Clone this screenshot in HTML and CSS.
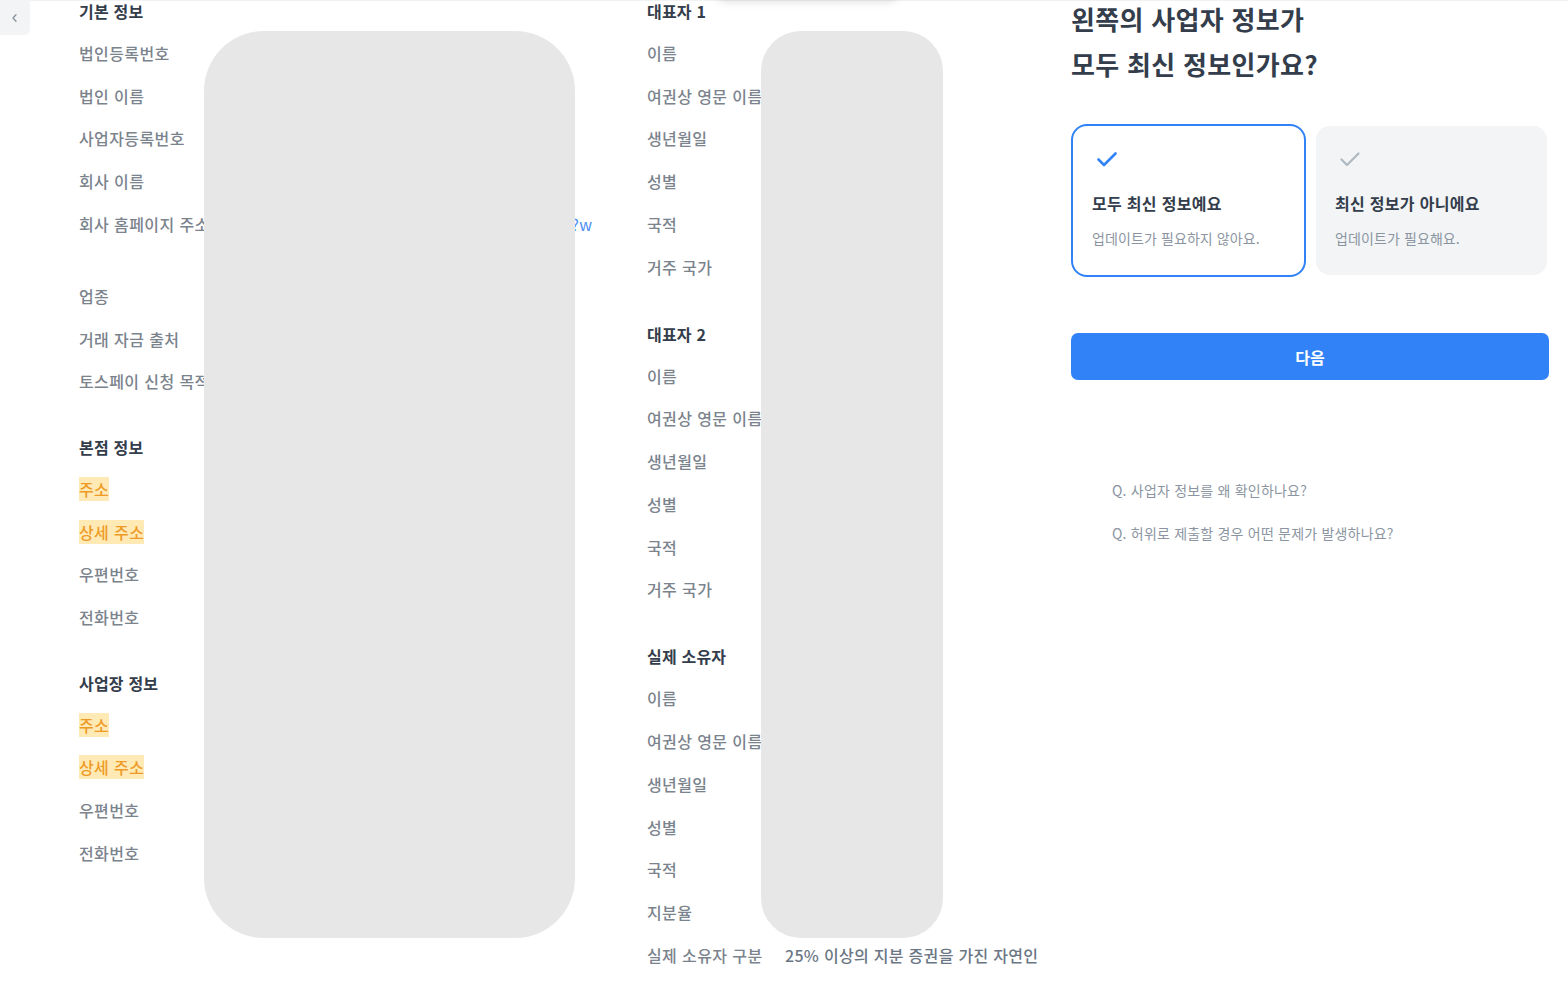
FILE: index.html
```html
<!DOCTYPE html>
<html lang="ko">
<head>
    <meta charset="UTF-8">
    <meta name="viewport" content="width=device-width, initial-scale=1.0">
    <title>사업자 정보 확인</title>
    <link rel="stylesheet" href="styles.css">
</head>
<body>
    <div class="page">
        <button class="back-btn" type="button" aria-label="뒤로">
            <svg width="8" height="10" viewBox="0 0 8 10"><path d="M5 1.8 L2 5 L5 8.2" fill="none" stroke="#8b95a1" stroke-width="1.4" stroke-linecap="round" stroke-linejoin="round"/></svg>
        </button>
        <div class="top-popover"></div>

        <main class="review">
            <!-- company info -->
            <section class="info-col info-col--company">
                <div class="group">
                    <div class="group-title">기본 정보</div>
                    <div class="row"><span class="row-label">법인등록번호</span><span class="row-value"></span></div>
                    <div class="row"><span class="row-label">법인 이름</span><span class="row-value"></span></div>
                    <div class="row"><span class="row-label">사업자등록번호</span><span class="row-value"></span></div>
                    <div class="row"><span class="row-label">회사 이름</span><span class="row-value"></span></div>
                    <div class="row">
                        <span class="row-label">회사 홈페이지 주소</span>
                        <span class="row-value row-value--link">
                            <a href="#" class="link-line">https://www.company-homepage.co.kr/main?w</a>
                            <a href="#" class="link-line">ww</a>
                        </span>
                    </div>
                    <div class="row"><span class="row-label">업종</span><span class="row-value"></span></div>
                    <div class="row"><span class="row-label">거래 자금 출처</span><span class="row-value"></span></div>
                    <div class="row"><span class="row-label">토스페이 신청 목적</span><span class="row-value"></span></div>
                </div>

                <div class="group">
                    <div class="group-title">본점 정보</div>
                    <div class="row"><span class="row-label"><mark class="hl">주소</mark></span><span class="row-value"></span></div>
                    <div class="row"><span class="row-label"><mark class="hl">상세 주소</mark></span><span class="row-value"></span></div>
                    <div class="row"><span class="row-label">우편번호</span><span class="row-value"></span></div>
                    <div class="row"><span class="row-label">전화번호</span><span class="row-value"></span></div>
                </div>

                <div class="group">
                    <div class="group-title">사업장 정보</div>
                    <div class="row"><span class="row-label"><mark class="hl">주소</mark></span><span class="row-value"></span></div>
                    <div class="row"><span class="row-label"><mark class="hl">상세 주소</mark></span><span class="row-value"></span></div>
                    <div class="row"><span class="row-label">우편번호</span><span class="row-value"></span></div>
                    <div class="row"><span class="row-label">전화번호</span><span class="row-value"></span></div>
                </div>

                <div class="mask mask--wide"></div>
            </section>

            <!-- representatives -->
            <section class="info-col info-col--people">
                <div class="group">
                    <div class="group-title">대표자 1</div>
                    <div class="row"><span class="row-label">이름</span><span class="row-value"></span></div>
                    <div class="row"><span class="row-label">여권상 영문 이름</span><span class="row-value"></span></div>
                    <div class="row"><span class="row-label">생년월일</span><span class="row-value"></span></div>
                    <div class="row"><span class="row-label">성별</span><span class="row-value"></span></div>
                    <div class="row"><span class="row-label">국적</span><span class="row-value"></span></div>
                    <div class="row"><span class="row-label">거주 국가</span><span class="row-value"></span></div>
                </div>

                <div class="group">
                    <div class="group-title">대표자 2</div>
                    <div class="row"><span class="row-label">이름</span><span class="row-value"></span></div>
                    <div class="row"><span class="row-label">여권상 영문 이름</span><span class="row-value"></span></div>
                    <div class="row"><span class="row-label">생년월일</span><span class="row-value"></span></div>
                    <div class="row"><span class="row-label">성별</span><span class="row-value"></span></div>
                    <div class="row"><span class="row-label">국적</span><span class="row-value"></span></div>
                    <div class="row"><span class="row-label">거주 국가</span><span class="row-value"></span></div>
                </div>

                <div class="group">
                    <div class="group-title">실제 소유자</div>
                    <div class="row"><span class="row-label">이름</span><span class="row-value"></span></div>
                    <div class="row"><span class="row-label">여권상 영문 이름</span><span class="row-value"></span></div>
                    <div class="row"><span class="row-label">생년월일</span><span class="row-value"></span></div>
                    <div class="row"><span class="row-label">성별</span><span class="row-value"></span></div>
                    <div class="row"><span class="row-label">국적</span><span class="row-value"></span></div>
                    <div class="row"><span class="row-label">지분율</span><span class="row-value"></span></div>
                    <div class="row"><span class="row-label">실제 소유자 구분</span><span class="row-value row-value--text">25% 이상의 지분 증권을 가진 자연인</span></div>
                </div>

                <div class="mask mask--narrow"></div>
            </section>

            <!-- confirm panel -->
            <aside class="confirm">
                <h2 class="confirm-title">왼쪽의 사업자 정보가<br>모두 최신 정보인가요?</h2>

                <div class="choices">
                    <div class="choice choice--on">
                        <svg class="choice-check" width="26" height="24" viewBox="0 0 26 24"><path d="M6.5 11.5 L12 17 L23.5 5.5" fill="none" stroke="#3182f6" stroke-width="2.6" stroke-linecap="round" stroke-linejoin="round"/></svg>
                        <div class="choice-title">모두 최신 정보예요</div>
                        <div class="choice-desc">업데이트가 필요하지 않아요.</div>
                    </div>
                    <div class="choice choice--off">
                        <svg class="choice-check" width="26" height="24" viewBox="0 0 26 24"><path d="M6.5 11.5 L12 17 L23.5 5.5" fill="none" stroke="#b0b8c1" stroke-width="2.2" stroke-linecap="round" stroke-linejoin="round"/></svg>
                        <div class="choice-title">최신 정보가 아니에요</div>
                        <div class="choice-desc">업데이트가 필요해요.</div>
                    </div>
                </div>

                <button class="next-btn" type="button">다음</button>

                <ul class="faq">
                    <li><a href="#">Q. 사업자 정보를 왜 확인하나요?</a></li>
                    <li><a href="#">Q. 허위로 제출할 경우 어떤 문제가 발생하나요?</a></li>
                </ul>
            </aside>
        </main>
    </div>
</body>
</html>
```

FILE: styles.css
```css
body {
    margin: 0;
    font-family: "Noto Sans CJK KR", "Noto Sans", sans-serif;
    background-color: #fff;
    color: #333d4b;
    overflow: hidden;
}

.page {
    position: relative;
    height: 981px;
    box-shadow: inset 0 1px 0 #f1f2f4;
}

.back-btn {
    position: absolute;
    top: 0;
    left: 0;
    width: 30px;
    height: 35px;
    padding: 0;
    border: none;
    border-radius: 0 0 6px 0;
    background-color: #f2f4f6;
    display: flex;
    align-items: center;
    justify-content: center;
    z-index: 3;
}

.top-popover {
    position: absolute;
    top: -30px;
    left: 715px;
    width: 185px;
    height: 30px;
    border-radius: 12px;
    box-shadow: 0 2px 8px rgba(0, 0, 0, 0.12);
    background-color: #fff;
}

.review {
    display: grid;
    grid-template-columns: 647px 424px 478px;
}

.info-col {
    position: relative;
}

.info-col--company {
    padding-left: 79px;
}

.group + .group {
    margin-top: 33px;
}

.info-col--people .group + .group {
    margin-top: 34.5px;
}

.group-title {
    height: 22px;
    line-height: 22px;
    margin-bottom: 10px;
    font-size: 16px;
    font-weight: 700;
    letter-spacing: 0.2px;
    color: #333d4b;
}

.row {
    display: flex;
    gap: 14px;
    padding: 10px 0;
    line-height: 22.7px;
    font-size: 16px;
    letter-spacing: 0.4px;
}

.row-label {
    width: 124px;
    flex-shrink: 0;
    white-space: nowrap;
    font-weight: 500;
    color: #7b838d;
}

.row-value {
    color: #6b7684;
}

.row-value--text {
    white-space: nowrap;
    font-weight: 500;
    letter-spacing: 0.3px;
}

.row-value--link {
    width: 375px;
    overflow: hidden;
    text-align: right;
    margin-bottom: 6.6px;
}

.link-line {
    display: block;
    white-space: nowrap;
    color: #4a8ff5;
    text-decoration: none;
}

.link-line + .link-line {
    text-align: left;
}

.hl {
    background-color: #ffeab5;
    color: #ee9a27;
}

.mask {
    position: absolute;
    top: 31px;
    height: 907px;
    background-color: #e7e7e7;
}

.mask--wide {
    left: 204px;
    width: 371px;
    border-radius: 60px;
}

.mask--narrow {
    left: 114px;
    width: 182px;
    border-radius: 40px;
}

.confirm-title {
    margin: -4px 0 0;
    font-size: 26px;
    line-height: 45px;
    font-weight: 700;
    letter-spacing: 0.3px;
    color: #333d4b;
}

.choices {
    display: grid;
    grid-template-columns: 1fr 1fr;
    gap: 8px;
    margin-top: 38px;
}

.choice {
    border: 2px solid #3182f6;
    border-radius: 16px;
    padding: 22px 19px 27px;
}

.choice--off {
    border-color: transparent;
    background-color: #f2f4f6;
    background-clip: padding-box;
}

.choice-check {
    display: block;
}

.choice-title {
    margin-top: 20px;
    font-size: 16px;
    line-height: 22px;
    font-weight: 700;
    letter-spacing: 0.3px;
    color: #333d4b;
}

.choice-desc {
    margin-top: 14px;
    font-size: 14px;
    line-height: 20px;
    letter-spacing: 0.1px;
    color: #8b95a1;
}

.next-btn {
    display: block;
    width: 100%;
    height: 47px;
    margin-top: 56px;
    border: none;
    border-radius: 7px;
    background-color: #3182f6;
    color: #fff;
    font-family: inherit;
    font-size: 16px;
    font-weight: 700;
    cursor: pointer;
}

.faq {
    list-style: none;
    margin: 100px 0 0;
    padding: 0 0 0 41px;
}

.faq li + li {
    margin-top: 23px;
}

.faq a {
    display: block;
    font-size: 14px;
    line-height: 20px;
    letter-spacing: 0.2px;
    color: #8b95a1;
    text-decoration: none;
}
```
